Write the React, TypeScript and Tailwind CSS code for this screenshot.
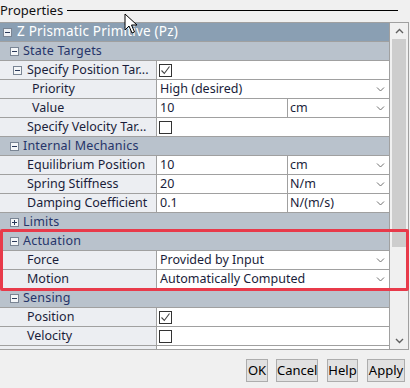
import React from "react";

type Row =
  | { kind: "root"; text: string }
  | { kind: "group"; text: string; open: boolean }
  | { kind: "prop"; text: string; indent: number; box?: boolean; value?: string; unit?: string; check?: boolean; select?: boolean }
  | { kind: "blank" };

const rows: Row[] = [
  { kind: "root", text: "Z Prismatic Primitive (Pz)" },
  { kind: "group", text: "State Targets", open: true },
  { kind: "prop", text: "Specify Position Tar...", indent: 27, box: true, check: true },
  { kind: "prop", text: "Priority", indent: 32, value: "High (desired)", select: true },
  { kind: "prop", text: "Value", indent: 32, value: "10", unit: "cm" },
  { kind: "prop", text: "Specify Velocity Tar...", indent: 27, check: false },
  { kind: "group", text: "Internal Mechanics", open: true },
  { kind: "prop", text: "Equilibrium Position", indent: 27, value: "10", unit: "cm" },
  { kind: "prop", text: "Spring Stiffness", indent: 27, value: "20", unit: "N/m" },
  { kind: "prop", text: "Damping Coefficient", indent: 27, value: "0.1", unit: "N/(m/s)" },
  { kind: "group", text: "Limits", open: false },
  { kind: "group", text: "Actuation", open: true },
  { kind: "prop", text: "Force", indent: 27, value: "Provided by Input", select: true },
  { kind: "prop", text: "Motion", indent: 27, value: "Automatically Computed", select: true },
  { kind: "group", text: "Sensing", open: true },
  { kind: "prop", text: "Position", indent: 27, check: true },
  { kind: "prop", text: "Velocity", indent: 27, check: false },
  { kind: "blank" },
];

function ToggleBox({ open, light }: { open: boolean; light?: boolean }) {
  return (
    <span
      className={`flex h-[9px] w-[9px] items-center justify-center border border-[#7a8594] ${
        light ? "bg-[#eef1f5]" : "bg-[#f4f6f8]"
      }`}
    >
      <svg width="7" height="7" viewBox="0 0 7 7">
        <path d="M1 3.5h5" stroke="#2b3a5a" strokeWidth="1" />
        {!open && <path d="M3.5 1v5" stroke="#2b3a5a" strokeWidth="1" />}
      </svg>
    </span>
  );
}

function Chevron() {
  return (
    <svg width="9" height="6" viewBox="0 0 9 6" className="ml-auto mr-[4px]">
      <path d="M1 1.5l3.5 3.5 3.5-3.5" fill="none" stroke="#707070" strokeWidth="1" />
    </svg>
  );
}

function CheckBox({ checked }: { checked: boolean }) {
  return (
    <span className="ml-[2px] flex h-[13px] w-[13px] items-center justify-center border border-[#333] bg-white">
      {checked && (
        <svg width="11" height="11" viewBox="0 0 11 11">
          <path d="M1.5 5.5l2.8 3 5.2-7" fill="none" stroke="#444" strokeWidth="1.1" />
        </svg>
      )}
    </span>
  );
}

function GridRow({ row }: { row: Row }) {
  if (row.kind === "root") {
    return (
      <div className="flex h-[19px] items-center border-b border-[#a0a0a0] bg-[#8a9fb3] pl-[3px] text-[13.5px] text-white">
        <ToggleBox open light />
        <span className="ml-[5px] tracking-[0.2px]">{row.text}</span>
      </div>
    );
  }
  if (row.kind === "group") {
    return (
      <div className="flex h-[19px] items-center border-b border-[#a0a0a0] bg-[#b9c2cc] pl-[10px] text-[#26356a]">
        <ToggleBox open={row.open} />
        <span className="ml-[4px] tracking-[0.2px]">{row.text}</span>
      </div>
    );
  }
  if (row.kind === "blank") {
    return (
      <div className="flex h-[19px] border-b border-[#a0a0a0]">
        <div className="w-[157px] border-r border-[#a0a0a0] bg-[#eceef2]" />
        <div className="flex-1 bg-white" />
      </div>
    );
  }
  return (
    <div className="flex h-[19px] border-b border-[#a0a0a0] text-[#1a1d3a]">
      <div className="flex w-[157px] shrink-0 items-center border-r border-[#a0a0a0] bg-[#eceef2]">
        {row.box ? (
          <span className="ml-[13px] flex items-center">
            <ToggleBox open />
            <span className="ml-[5px] whitespace-nowrap">{row.text}</span>
          </span>
        ) : (
          <span className="whitespace-nowrap" style={{ marginLeft: row.indent }}>
            {row.text}
          </span>
        )}
      </div>
      {row.check !== undefined ? (
        <div className="flex flex-1 items-center bg-white">
          <CheckBox checked={row.check} />
        </div>
      ) : row.select ? (
        <div className="flex flex-1 items-center bg-white pl-[3px]">
          <span>{row.value}</span>
          <Chevron />
        </div>
      ) : (
        <div className="flex flex-1 bg-white">
          <div className="flex w-[131px] items-center border-r border-[#a0a0a0] pl-[3px]">{row.value}</div>
          <div className="flex flex-1 items-center pl-[2px]">
            <span>{row.unit}</span>
            <Chevron />
          </div>
        </div>
      )}
    </div>
  );
}

function Scrollbar() {
  return (
    <div className="flex w-[18px] flex-col bg-[#f0f0f0]">
      <div className="flex h-[16px] items-center justify-center">
        <svg width="9" height="6" viewBox="0 0 9 6">
          <path d="M1 5l3.5-3.5 3.5 3.5" fill="none" stroke="#606060" strokeWidth="1.4" />
        </svg>
      </div>
      <div className="mx-[2px] h-[208px] bg-[#cdcdcd]" />
      <div className="flex-1" />
      <div className="flex h-[16px] items-center justify-center">
        <svg width="9" height="6" viewBox="0 0 9 6">
          <path d="M1 1l3.5 3.5 3.5-3.5" fill="none" stroke="#606060" strokeWidth="1.4" />
        </svg>
      </div>
    </div>
  );
}

export default function App() {
  return (
    <div
      className="relative h-[388px] w-[410px] overflow-hidden bg-[#f0f0f0] text-[12.5px]"
      style={{ fontFamily: '"Noto Sans", "Noto Sans CJK SC", sans-serif' }}
    >
      {/* title with rule */}
      <div className="flex h-[22px] items-center pb-[2px]">
        <span className="text-[13px] leading-none text-[#111]">Properties</span>
        <div className="ml-[4px] mr-[12px] h-px flex-1 bg-black" />
      </div>

      {/* property grid */}
      <div className="flex h-[328px] w-[409px] border-y border-r border-[#a0a0a0]">
        <div className="w-[390px] overflow-hidden border-r border-[#a0a0a0] leading-none">
          {rows.map((r, i) => (
            <GridRow key={i} row={r} />
          ))}
        </div>
        <Scrollbar />
      </div>

      {/* dialog buttons */}
      <div className="mt-[9px] flex h-[23px] text-[13px] text-black">
        <button className="ml-[246px] w-[22px] border border-[#adadad] bg-[#e1e1e1]">OK</button>
        <button className="ml-[8px] w-[42px] border border-[#adadad] bg-[#e1e1e1]">Cancel</button>
        <button className="ml-[9px] w-[31px] border border-[#adadad] bg-[#e1e1e1]">Help</button>
        <button className="ml-[9px] w-[38px] border border-[#adadad] bg-[#e1e1e1]">Apply</button>
      </div>

      {/* red highlight around Actuation */}
      <div className="pointer-events-none absolute left-0 top-[229px] h-[62px] w-[409px] rounded-[2px] border-[3px] border-[#e83a4a]" />

      {/* mouse cursor */}
      <svg className="pointer-events-none absolute left-[124px] top-[13px]" width="14" height="21" viewBox="0 0 14 21">
        <path d="M1 1v16l4-4 3 7 2.5-1-3-7h5.5z" fill="white" stroke="black" strokeWidth="1" strokeLinejoin="round" />
      </svg>
    </div>
  );
}
